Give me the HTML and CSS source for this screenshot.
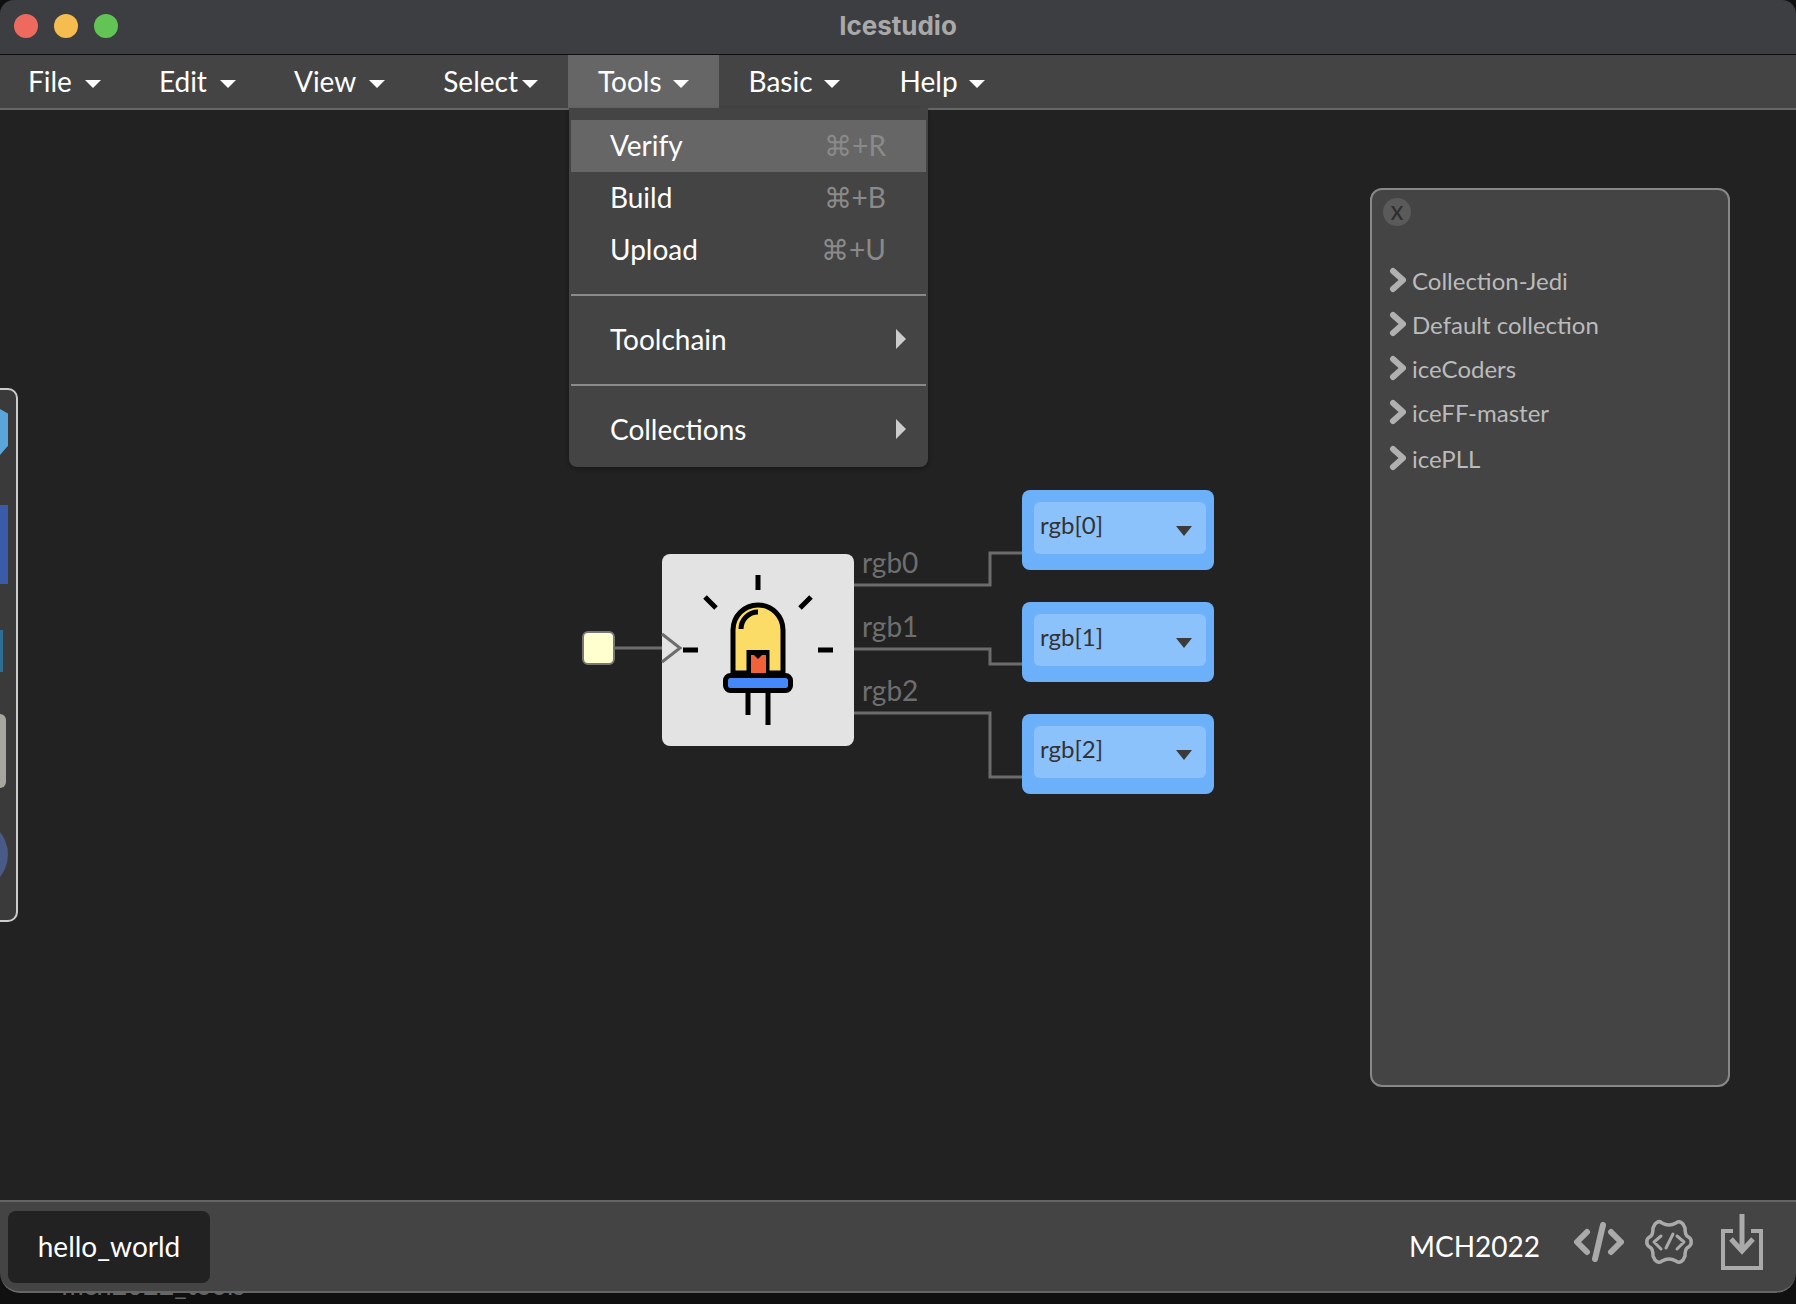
FILE: index.html
```html
<!DOCTYPE html>
<html lang="en">
<head>
    <meta charset="UTF-8">
    <meta name="viewport" content="width=device-width, initial-scale=1.0">
    <title>Icestudio</title>
    <link rel="stylesheet" href="styles.css">
</head>

<body>
    <div class="peek-text">&gt;&nbsp; mch2022_tools</div>

    <main class="window">
        <header class="title-bar">
            <div class="traffic-lights">
                <span class="light light-red"></span>
                <span class="light light-yellow"></span>
                <span class="light light-green"></span>
            </div>
            <h1 class="window-title">Icestudio</h1>
        </header>

        <nav class="menu-bar">
            <div class="menu-item">File<span class="caret"></span></div>
            <div class="menu-item">Edit<span class="caret"></span></div>
            <div class="menu-item">View<span class="caret"></span></div>
            <div class="menu-item menu-item-tight">Select<span class="caret"></span></div>
            <div class="menu-item menu-item-wide menu-item-open">Tools<span class="caret"></span>
                <div class="dropdown">
                    <div class="dropdown-row dropdown-row-active">Verify<span class="shortcut">⌘+R</span></div>
                    <div class="dropdown-row">Build<span class="shortcut">⌘+B</span></div>
                    <div class="dropdown-row">Upload<span class="shortcut">⌘+U</span></div>
                    <hr class="dropdown-divider">
                    <div class="dropdown-row">Toolchain<span class="submenu-arrow"></span></div>
                    <hr class="dropdown-divider">
                    <div class="dropdown-row">Collections<span class="submenu-arrow"></span></div>
                </div>
            </div>
            <div class="menu-item menu-item-wide">Basic<span class="caret"></span></div>
            <div class="menu-item menu-item-wide">Help<span class="caret"></span></div>
        </nav>

        <section class="canvas">
            <aside class="dock">
                <span class="dock-icon dock-hex"></span>
                <span class="dock-icon dock-board"></span>
                <span class="dock-icon dock-chip"></span>
                <span class="dock-icon dock-metal"></span>
                <span class="dock-icon dock-round"></span>
            </aside>

            <div class="input-port"></div>

            <div class="led-block">
                <svg width="192" height="192" viewBox="0 0 192 192" fill="none" stroke="#000" stroke-width="5">
                    <path d="M96 21V36M43 43L54 54M149 43L138 54M21 96H36M156 96H171"/>
                    <path d="M71 119V76A25 25 0 0 1 121 76V119Z" fill="#fadc66"/>
                    <path d="M79 75A17 17 0 0 1 96 58"/>
                    <rect x="84.5" y="96" width="23" height="24" fill="#000" stroke="none"/>
                    <path d="M89 101H92L96 105L100 101H104V120H89Z" fill="#f0623a" stroke="none"/>
                    <path d="M86 139V161M106 139V171"/>
                    <rect x="63.5" y="121.5" width="65" height="15" rx="5" fill="#4488fc"/>
                </svg>
            </div>

            <svg class="wires" width="1796" height="1090" viewBox="0 0 1796 1090" fill="none">
                <path d="M614 538H662"/>
                <path d="M662 524L680 538L662 552"/>
                <path d="M854 475H990V443H1022"/>
                <path d="M854 539H990V554H1022"/>
                <path d="M854 603H990V667H1022"/>
            </svg>

            <span class="wire-label wire-label-0">rgb0</span>
            <span class="wire-label wire-label-1">rgb1</span>
            <span class="wire-label wire-label-2">rgb2</span>

            <div class="pin pin-0"><div class="pin-select">rgb[0]<span class="pin-caret"></span></div></div>
            <div class="pin pin-1"><div class="pin-select">rgb[1]<span class="pin-caret"></span></div></div>
            <div class="pin pin-2"><div class="pin-select">rgb[2]<span class="pin-caret"></span></div></div>

            <aside class="collections-panel">
                <button class="panel-close">x</button>
                <ul class="tree">
                    <li class="tree-item"><svg class="chevron" width="18" height="26" viewBox="0 0 18 26" fill="none"><path d="M4 4L14 13L4 22"/></svg>Collection-Jedi</li>
                    <li class="tree-item"><svg class="chevron" width="18" height="26" viewBox="0 0 18 26" fill="none"><path d="M4 4L14 13L4 22"/></svg>Default collection</li>
                    <li class="tree-item"><svg class="chevron" width="18" height="26" viewBox="0 0 18 26" fill="none"><path d="M4 4L14 13L4 22"/></svg>iceCoders</li>
                    <li class="tree-item"><svg class="chevron" width="18" height="26" viewBox="0 0 18 26" fill="none"><path d="M4 4L14 13L4 22"/></svg>iceFF-master</li>
                    <li class="tree-item tree-item-last"><svg class="chevron" width="18" height="26" viewBox="0 0 18 26" fill="none"><path d="M4 4L14 13L4 22"/></svg>icePLL</li>
                </ul>
            </aside>
        </section>

        <footer class="status-bar">
            <div class="file-tab">hello_world</div>
            <div class="status-right">
                <span class="board-name">MCH2022</span>
                <svg class="status-icon" width="50" height="40" viewBox="0 0 50 40" fill="none" stroke="#aaa" stroke-width="6" stroke-linecap="round" stroke-linejoin="round">
                    <path d="M13 10L3 20L13 30M37 10L47 20L37 30"/>
                    <path d="M29 3L21 37"/>
                </svg>
                <svg class="status-icon" width="50" height="48" viewBox="0 0 50 48" fill="none" stroke="#aaa" stroke-width="3.5" stroke-linecap="round" stroke-linejoin="round">
                    <path d="M11 6Q15 2 18 5Q25 9 32 5Q35 2 39 6L41 10Q41 16 43 18Q48 21 47 24Q48 27 43 30Q41 32 41 38L39 42Q35 46 32 43Q25 39 18 43Q15 46 11 42L9 38Q9 32 7 30Q2 27 3 24Q2 21 7 18Q9 16 9 10Z"/>
                    <path d="M17 18L10 24L17 31M33 18L40 24L33 31M29 16L22 30" stroke-width="3"/>
                </svg>
                <svg class="status-icon status-icon-save" width="42" height="56" viewBox="0 0 42 56" fill="none" stroke="#aaa" stroke-width="4">
                    <path d="M12 17H2V54H40V17H30"/>
                    <path d="M21 0V36" stroke-width="5"/>
                    <path d="M10 25L21 37L32 25" stroke-width="5"/>
                </svg>
            </div>
        </footer>
    </main>
</body>
</html>
```

FILE: styles.css
```css
:root {
    --color-desktop: #101010;
    --color-canvas: #222222;
    --color-bar: #444444;
    --color-bar-line: #666666;
    --color-hover: #666666;
    --color-white: #FFFFFF;
    --color-muted: #BBBBBB;
    --color-wire: #6C6C6C;
    --color-pin: #6BB0F8;
    --color-pin-light: #8CC2FB;
}

* {
    margin: 0;
    padding: 0;
    box-sizing: border-box;
}

body {
    height: 1304px;
    overflow: hidden;
    position: relative;
    background-color: var(--color-desktop);
    font-family: "Lato", sans-serif;
}

.peek-text {
    position: absolute;
    left: 32px;
    top: 1267px;
    font-size: 27px;
    line-height: 36px;
    color: #666666;
}

.window {
    position: relative;
    display: flex;
    flex-direction: column;
    height: 1293px;
    border-radius: 14px 14px 20px 20px;
    overflow: hidden;
}

/* title bar */
.title-bar {
    position: relative;
    flex: 0 0 55px;
    display: flex;
    align-items: center;
    justify-content: center;
    padding-bottom: 4px;
    background-color: #3D3E42;
    border-bottom: 1px solid #0E0E0E;
}

.traffic-lights {
    position: absolute;
    left: 14px;
    top: 14px;
    display: flex;
    gap: 16px;
}

.light {
    width: 24px;
    height: 24px;
    border-radius: 50%;
}

.light-red { background-color: #EE6A5F; }
.light-yellow { background-color: #F5BD4F; }
.light-green { background-color: #61C454; }

.window-title {
    font-family: "Inter", sans-serif;
    font-size: 26px;
    font-weight: 700;
    color: #A9A9A9;
}

/* menu bar */
.menu-bar {
    flex: 0 0 55px;
    display: flex;
    background-color: var(--color-bar);
    border-bottom: 2px solid var(--color-bar-line);
    font-size: 28px;
    color: var(--color-white);
}

.menu-item {
    position: relative;
    display: flex;
    align-items: center;
    padding: 0 30px 2px 28px;
    height: 53px;
}

.caret {
    width: 0;
    height: 0;
    margin-left: 13px;
    margin-top: 6px;
    border-left: 8px solid transparent;
    border-right: 8px solid transparent;
    border-top: 8px solid var(--color-white);
}

.menu-item-tight .caret {
    margin-left: 4px;
}

.menu-item-wide {
    padding-left: 30px;
}

.menu-item-wide .caret {
    margin-left: 11px;
}

.menu-item-open {
    background-color: var(--color-hover);
}

.dropdown {
    position: absolute;
    z-index: 5;
    left: 1px;
    top: 53px;
    width: 359px;
    padding: 12px 2px 11px;
    background-color: var(--color-bar);
    border-radius: 0 0 8px 8px;
    box-shadow: 0 2px 4px rgba(0, 0, 0, 0.3);
}

.dropdown-row {
    display: flex;
    align-items: center;
    justify-content: space-between;
    height: 52px;
    padding: 0 40px 2px 39px;
}

.dropdown-row-active {
    background-color: var(--color-hover);
}

.shortcut {
    color: #8A8A8A;
    font-size: 28px;
}

.submenu-arrow {
    width: 0;
    height: 0;
    margin-right: -20px;
    border-top: 10px solid transparent;
    border-bottom: 10px solid transparent;
    border-left: 10px solid #CCCCCC;
}

.dropdown-divider {
    height: 2px;
    margin: 18px 0;
    border: none;
    background-color: #8A8A8A;
}

/* canvas */
.canvas {
    position: relative;
    flex: 1;
    background-color: var(--color-canvas);
    overflow: hidden;
}

.wires {
    position: absolute;
    left: 0;
    top: 0;
}

.wires path {
    stroke: var(--color-wire);
    stroke-width: 3;
}

.dock {
    position: absolute;
    left: -4px;
    top: 278px;
    width: 22px;
    height: 534px;
    padding-top: 19px;
    display: flex;
    flex-direction: column;
    background-color: #3A3A3A;
    border: 2px solid #CCCCCC;
    border-radius: 0 10px 10px 0;
    overflow: hidden;
}

.dock-icon {
    display: block;
    flex-shrink: 0;
    margin-left: 2px;
}

.dock-hex {
    width: 8px;
    height: 46px;
    background-color: #5AA5DC;
    clip-path: polygon(0 0, 100% 10%, 100% 80%, 0 100%);
}

.dock-board {
    width: 8px;
    height: 79px;
    margin-top: 50px;
    background-color: #3A5CA8;
}

.dock-chip {
    width: 3px;
    height: 42px;
    margin-top: 46px;
    background-color: #2F6E94;
}

.dock-metal {
    width: 6px;
    height: 74px;
    margin-top: 42px;
    background-color: #A6A69E;
    border-radius: 0 6px 6px 0;
}

.dock-round {
    width: 71px;
    height: 71px;
    margin-top: 31px;
    margin-left: -61px;
    background-color: #4A5A86;
    border-radius: 50%;
}

.input-port {
    position: absolute;
    left: 582px;
    top: 521px;
    width: 33px;
    height: 34px;
    background-color: #FFFFD0;
    border: 2px solid #777777;
    border-radius: 6px;
}

.led-block {
    position: absolute;
    left: 662px;
    top: 444px;
    width: 192px;
    height: 192px;
    background-color: #E3E3E3;
    border-radius: 8px;
}

.led-block svg {
    display: block;
}

.wire-label {
    position: absolute;
    left: 862px;
    font-size: 28px;
    line-height: 32px;
    color: #6E6E6E;
}

.wire-label-0 { top: 436px; }
.wire-label-1 { top: 500px; }
.wire-label-2 { top: 564px; }

.pin {
    position: absolute;
    left: 1022px;
    width: 192px;
    height: 80px;
    padding: 12px 8px 16px 12px;
    background-color: var(--color-pin);
    border-radius: 8px;
}

.pin-0 { top: 380px; }
.pin-1 { top: 492px; }
.pin-2 { top: 604px; }

.pin-select {
    display: flex;
    align-items: center;
    justify-content: space-between;
    height: 52px;
    padding: 0 14px 8px 6px;
    background-color: var(--color-pin-light);
    border-radius: 6px;
    font-size: 24px;
    color: #333333;
}

.pin-caret {
    width: 0;
    height: 0;
    margin-top: 14px;
    border-left: 8px solid transparent;
    border-right: 8px solid transparent;
    border-top: 10px solid #3A3A3A;
}

/* collections panel */
.collections-panel {
    position: absolute;
    left: 1370px;
    top: 78px;
    width: 360px;
    height: 899px;
    padding: 8px 11px;
    background-color: var(--color-bar);
    border: 2px solid #888888;
    border-radius: 12px;
}

.panel-close {
    display: block;
    width: 28px;
    height: 28px;
    border: none;
    border-radius: 50%;
    background-color: #5A5A5A;
    color: #2E2E2E;
    font-family: "Lato", sans-serif;
    font-size: 26px;
    line-height: 22px;
    padding-bottom: 5px;
}

.tree {
    list-style-type: none;
    margin-top: 32px;
    color: var(--color-muted);
    font-size: 24px;
}

.tree-item {
    display: flex;
    align-items: center;
    gap: 5px;
    height: 44px;
    margin-left: 6px;
}

.tree-item-last {
    margin-top: 2px;
}

.chevron path {
    stroke: #B0B0B0;
    stroke-width: 6;
    stroke-linecap: round;
    stroke-linejoin: round;
}

/* status bar */
.status-bar {
    flex: 0 0 93px;
    display: flex;
    align-items: center;
    justify-content: space-between;
    padding: 0 33px 0 8px;
    background-color: var(--color-bar);
    border-top: 2px solid var(--color-bar-line);
    border-bottom: 2px solid var(--color-bar-line);
    border-radius: 0 0 20px 20px;
}

.file-tab {
    display: flex;
    align-items: center;
    justify-content: center;
    width: 202px;
    height: 72px;
    padding-bottom: 2px;
    background-color: var(--color-canvas);
    border-radius: 8px;
    font-size: 28px;
    color: var(--color-white);
}

.status-right {
    display: flex;
    align-items: center;
    gap: 20px;
    padding-bottom: 2px;
    color: var(--color-white);
}

.board-name {
    margin-right: 14px;
    font-size: 28px;
}

.status-icon {
    display: block;
    margin-top: -7px;
}

.status-icon-save {
    margin-left: 7px;
    margin-top: -8px;
}
```
